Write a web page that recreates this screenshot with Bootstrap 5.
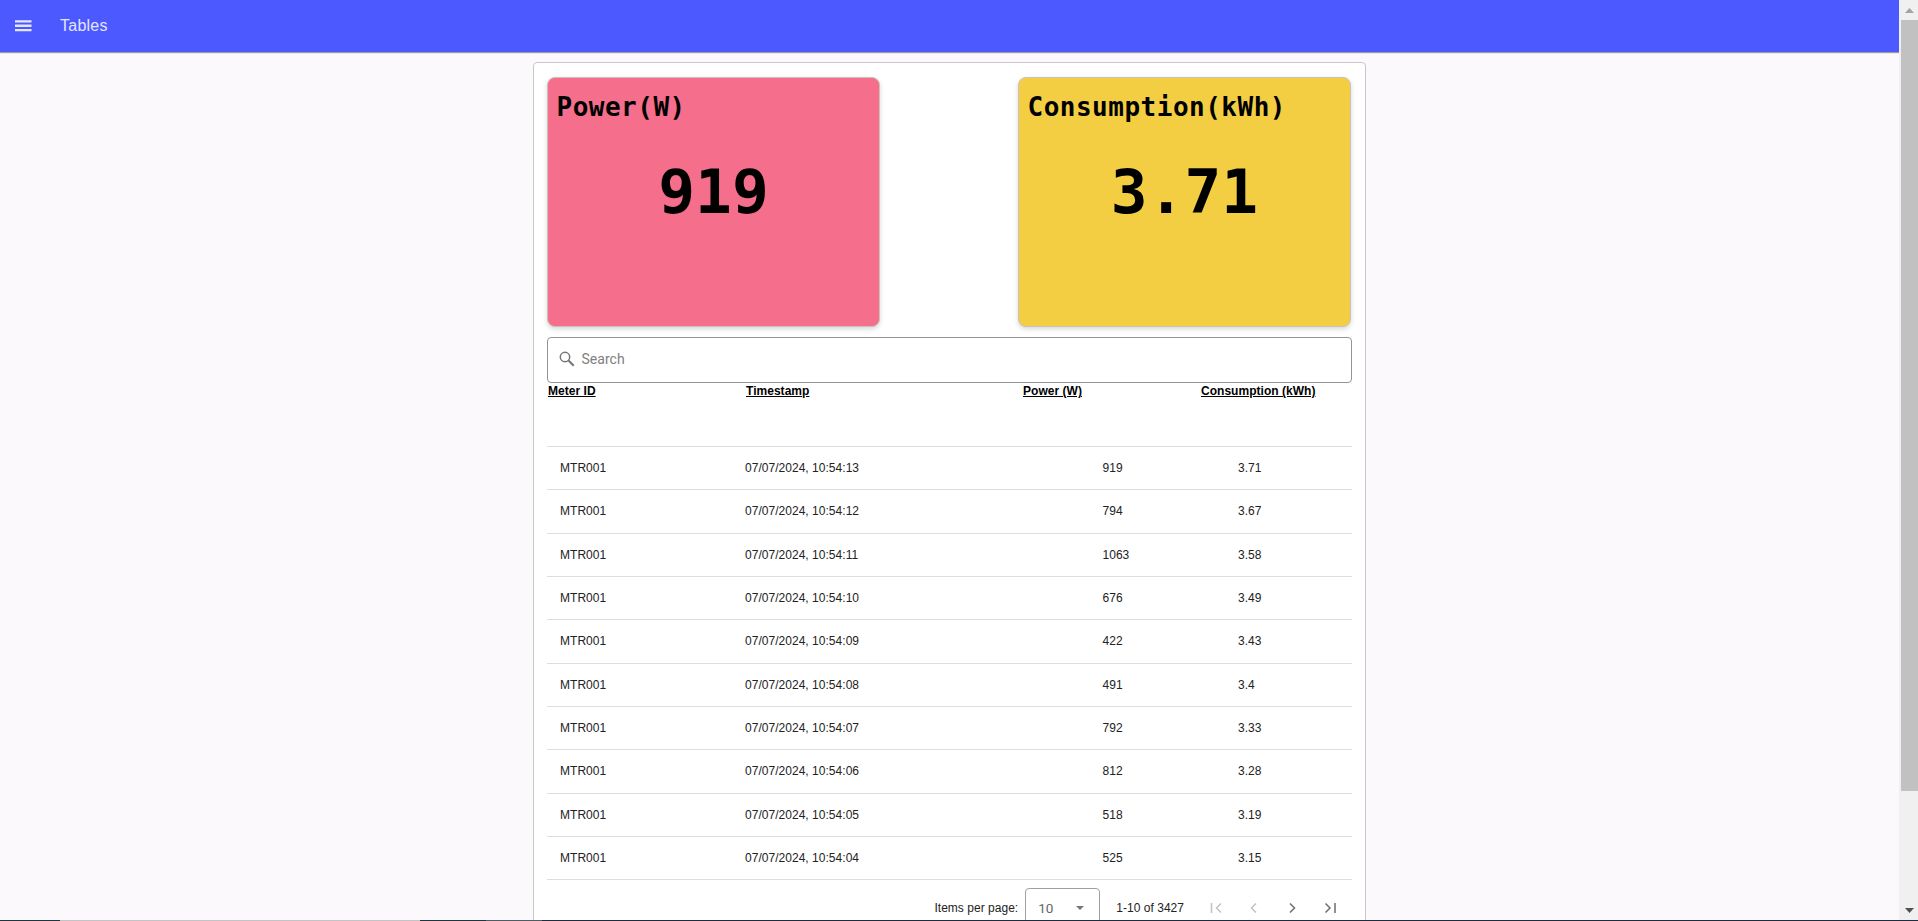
<!DOCTYPE html>
<html lang="en">
<head>
<meta charset="utf-8">
<title>Tables</title>
<link href="https://cdn.jsdelivr.net/npm/bootstrap@5.3.0/dist/css/bootstrap.min.css" rel="stylesheet">
<style>
body{font-family:"Liberation Sans",Arial,sans-serif;background:#fbf9fb;height:921px;font-size:12px;letter-spacing:.03px;color:#222}
.page-area{width:1899px;height:921px}
.topbar{height:52px;background:#4c59ff;color:#e4e6ff;padding-left:15px;font-size:16px;letter-spacing:.25px;box-shadow:0 1px 1px rgba(60,60,90,.5);position:relative}
.topbar .title{margin-left:28px;line-height:20px;margin-top:-1px}
.panel{width:833px;height:900px;margin:10px 0 0 533px;border:1px solid #c8c8cc;border-radius:4px;background:#fff;padding:14px 13px 0}
.tiles{padding-right:1px}
.tile{width:333px;height:250px;border:1px solid #c9c3b8;border-radius:8px;box-shadow:0 2px 5px rgba(0,0,0,.16);color:#000;font-family:"DejaVu Sans Mono",monospace;font-weight:700;letter-spacing:0}
.tile-pink{background:#f56e8b}
.tile-gold{background:#f3ce43}
.tile h2{font:inherit;font-size:26px;letter-spacing:.5px;line-height:32px;margin:13px 0 0 8.5px}
.tile p{font-size:61.2px;line-height:70px;margin:34px 0 0;text-align:center}
.search{height:46px;margin-top:10px;border:1px solid #949494;border-radius:4px;padding:0 0 1px 11px;font-family:Roboto,sans-serif;font-size:14px;color:#808080}
.search span{margin-left:5.5px}
.meter{table-layout:fixed;width:805px;border-collapse:separate;border-spacing:0}
.meter th{height:64px;padding:1px 0 0;vertical-align:top;line-height:14px;color:#000;text-decoration:underline;border-bottom:1px solid #dedede;font-weight:700}
.meter td{height:43.35px;padding:0 0 .4px 13px;vertical-align:middle;line-height:14px;border-bottom:1px solid #dedede}
.meter th:nth-child(1){padding-left:1px}.meter th:nth-child(2){padding-left:14px}
.meter th:nth-child(3){padding-left:26px}.meter th:nth-child(4){padding-left:14px}
.meter td:nth-child(3){padding-left:105.5px}.meter td:nth-child(4){padding-left:51px}
.pager{padding:7px 12px 0 0;height:48px}
.size-box{width:75px;height:40px;border:1px solid #a0a0a0;border-radius:4px;margin:0 16px 0 7px;padding:0 15px 0 12px;font-family:Roboto,sans-serif;font-size:13.5px;color:#666}
.sbar{width:19px;background:#f0f0f0;padding-left:2px}
.sbar .thumb{height:771px;background:#c1c1c1}
.edge{left:0;bottom:0;width:1918px;height:1px}
</style>
<script src="https://cdn.jsdelivr.net/npm/bootstrap@5.3.0/dist/js/bootstrap.bundle.min.js"></script>
</head>
<body class="overflow-hidden position-relative">
<div class="d-flex overflow-hidden">
<div class="page-area overflow-hidden flex-shrink-0">
<header class="topbar d-flex align-items-center">
<svg width="17" height="12" viewBox="0 0 17 12" fill="#e4e6ff"><path d="M0 .2h16.500v2.300H0zM0 4.600h16.500v2.300H0zM0 9h16.500v2.300H0z"/></svg>
<span class="title">Tables</span>
</header>
<main class="panel">
<section class="tiles d-flex justify-content-between">
<div class="tile tile-pink"><h2>Power(W)</h2><p>919</p></div>
<div class="tile tile-gold"><h2>Consumption(kWh)</h2><p>3.71</p></div>
</section>
<div class="search d-flex align-items-center">
<svg width="17" height="17" viewBox="0 0 17 17" fill="none" stroke="#757575"><circle cx="6" cy="6" r="4.700" stroke-width="1.5"/><path d="M9.500 9.500l5.200 5.200" stroke-width="2"/></svg>
<span>Search</span>
</div>
<table class="meter">
<colgroup><col style="width:185px"><col style="width:265px"><col style="width:190px"><col style="width:165px"></colgroup>
<thead><tr><th>Meter ID</th><th>Timestamp</th><th>Power (W)</th><th>Consumption (kWh)</th></tr></thead>
<tbody>
<tr><td>MTR001</td><td>07/07/2024, 10:54:13</td><td>919</td><td>3.71</td></tr>
<tr><td>MTR001</td><td>07/07/2024, 10:54:12</td><td>794</td><td>3.67</td></tr>
<tr><td>MTR001</td><td>07/07/2024, 10:54:11</td><td>1063</td><td>3.58</td></tr>
<tr><td>MTR001</td><td>07/07/2024, 10:54:10</td><td>676</td><td>3.49</td></tr>
<tr><td>MTR001</td><td>07/07/2024, 10:54:09</td><td>422</td><td>3.43</td></tr>
<tr><td>MTR001</td><td>07/07/2024, 10:54:08</td><td>491</td><td>3.4</td></tr>
<tr><td>MTR001</td><td>07/07/2024, 10:54:07</td><td>792</td><td>3.33</td></tr>
<tr><td>MTR001</td><td>07/07/2024, 10:54:06</td><td>812</td><td>3.28</td></tr>
<tr><td>MTR001</td><td>07/07/2024, 10:54:05</td><td>518</td><td>3.19</td></tr>
<tr><td>MTR001</td><td>07/07/2024, 10:54:04</td><td>525</td><td>3.15</td></tr>
</tbody>
</table>
<div class="pager d-flex align-items-center justify-content-end">
<span>Items per page:</span>
<div class="size-box d-flex align-items-center justify-content-between"><span>10</span><svg width="8" height="4"><path d="M0 0h8L4 4z" fill="#757575"/></svg></div>
<span>1-10 of 3427</span>
<svg class="ms-4" width="132" height="14" viewBox="0 0 132 14" fill="none" stroke-width="1.6"><g stroke="#c4c4c4"><path d="M3.500 2v10M13 2.500L8.500 7l4.500 4.500M48 2.500L43.500 7l4.500 4.500"/></g><g stroke="#757575"><path d="M82 2.500L86.500 7 82 11.500M117.500 2.500L122 7l-4.500 4.500M127 2v10"/></g></svg>
</div>
</main>
</div>
<aside class="sbar flex-shrink-0 d-flex flex-column">
<svg width="17" height="20"><path d="M4 13h9L8.500 8z" fill="#a3a3a3"/></svg>
<div class="thumb"></div>
<svg class="mt-auto" width="17" height="20"><path d="M4 7h9L8.500 12z" fill="#505050"/></svg>
</aside>
</div>
<div class="edge position-absolute d-flex">
<div style="width:60px;background:#1d3640"></div><div style="width:360px;background:#c4c4c4"></div><div style="width:66px;background:#1d3640"></div><div style="width:56px;background:#4d5d64"></div><div class="flex-fill" style="background:#1c2c42"></div>
</div>
</body>
</html>
